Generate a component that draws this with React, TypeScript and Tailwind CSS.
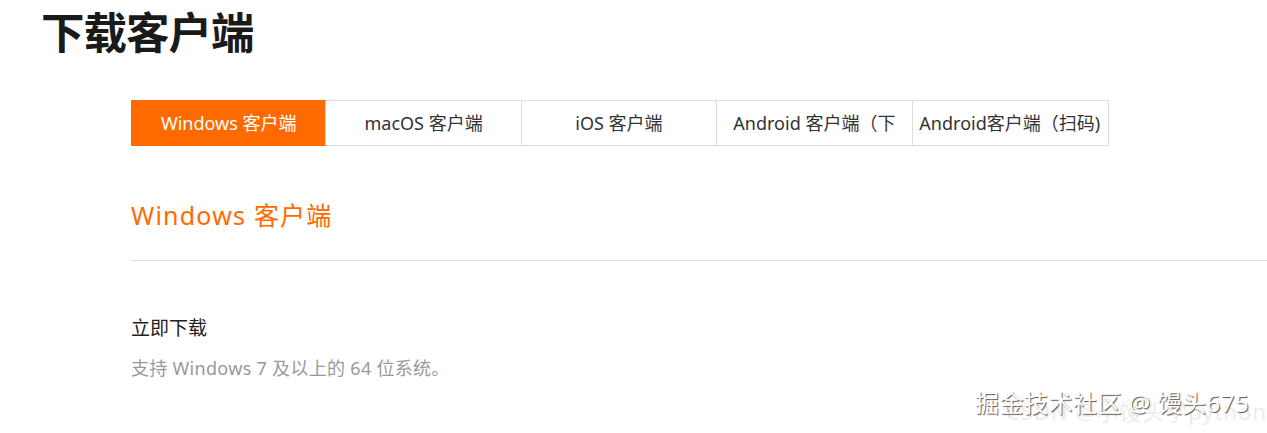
import React, { useState } from "react";

const tabs = ["Windows 客户端", "macOS 客户端", "iOS 客户端", "Android 客户端（下", "Android客户端（扫码)"];

const font = { fontFamily: '"Noto Sans", "Noto Sans CJK SC", sans-serif' };

const App: React.FC = () => {
  const [active, setActive] = useState(0);

  return (
    <div
      className="relative w-[1267px] h-[433px] overflow-hidden bg-white"
      style={font}
    >
      <h1 className="pl-[41px] pt-[6px] h-[100px] text-[43.5px] leading-[52px] font-bold text-[#1a1a1a] tracking-[-1px]">
        下载客户端
      </h1>

      <div className="pl-[131px]">
        <div className="flex w-[978px] h-[46px] border border-[#dcdcdc]">
          {tabs.map((t, i) => (
            <button
              key={t}
              onClick={() => setActive(i)}
              className={`w-[195.4px] shrink-0 flex items-center justify-center whitespace-nowrap text-[18px] ${
                i > 0 ? "border-l border-[#dcdcdc]" : ""
              } ${active === i ? "bg-[#ff6a00] text-white -m-px h-[46px]" : "text-[#333]"}`}
            >
              {t}
            </button>
          ))}
        </div>

        <h2 className="mt-[54px] text-[25px] leading-[30px] tracking-[1.2px] text-[#ff6a00]">
          Windows 客户端
        </h2>
      </div>

      <div className="ml-[131px] mt-[30px] border-t border-[#dcdcdc]" />

      <div className="pl-[131px] pt-[55px]">
        <p className="text-[19px] leading-[24px] text-[#222]">立即下载</p>
        <p className="mt-[17px] text-[18px] leading-[22px] text-[#999] tracking-[0.3px]">
          支持 Windows 7 及以上的 64 位系统。
        </p>
      </div>

      <div className="absolute right-0 top-[396px] text-[22px] leading-[30px] text-[#ececec] tracking-[1px] whitespace-nowrap">
        CSDN @小馒头学python
      </div>
      <div className="absolute left-[975px] top-[386px] text-[24px] leading-[34px] text-white tracking-[0.5px] whitespace-nowrap [text-shadow:1px_1px_1px_#555]">
        掘金技术社区 @ 馒头675
      </div>
    </div>
  );
};

export default App;
